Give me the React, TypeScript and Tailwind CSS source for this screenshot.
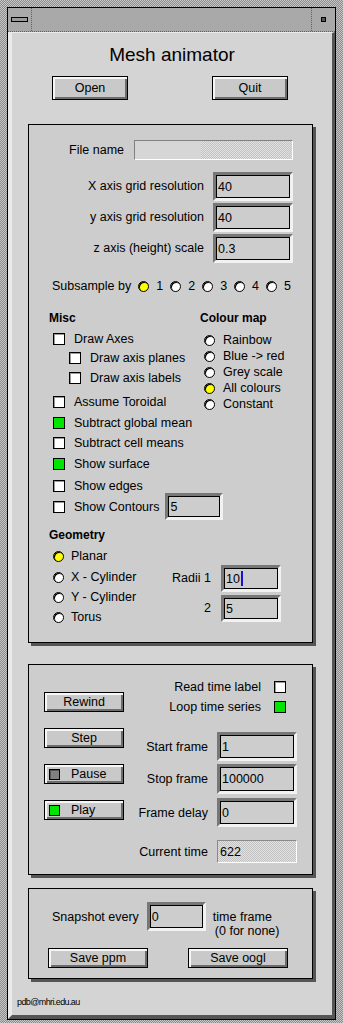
import React from 'react';

// stippled (dithered) fills like the old X server look
const stippleDark = 'bg-[image:repeating-conic-gradient(#8a8a8a_0_25%,#c8c8c8_0_50%)] bg-[length:2px_2px] bg-size-[2px_2px]';
const stippleLight = 'bg-[image:repeating-conic-gradient(#c2c2c2_0_25%,#e2e2e2_0_50%)] bg-[length:2px_2px] bg-size-[2px_2px]';

type Kids = { children?: React.ReactNode; className?: string };

const Panel: React.FC<Kids> = ({ children, className = '' }) => (
    <div className={`ml-[16px] w-[285px] shrink-0 border border-black bg-[#cdcdcd] shadow-[3px_3px_0_#555] ${className}`}>
        {children}
    </div>
);

const Btn: React.FC<Kids & { dot?: 'gray' | 'green' }> = ({ children, className = '', dot }) => (
    <div
        className={`flex items-center shrink-0 border border-black bg-[#c9c9c9] shadow-[inset_2px_2px_0_#f6f6f6,inset_-2px_-2px_0_#6c6c6c] leading-[14px] ${dot ? 'pl-[4px]' : 'justify-center'} ${className}`}
    >
        {dot && (
            <span
                className={`w-[11px] h-[11px] border border-black mr-[11px] ${dot === 'green' ? 'bg-[#00e600]' : 'bg-[#808080] shadow-[inset_1px_1px_0_#555]'}`}
            />
        )}
        <span>{children}</span>
    </div>
);

const Field: React.FC<Kids & { cursor?: boolean }> = ({ children, className = '', cursor }) => (
    <div className={`shrink-0 border-[3px] border-t-[#777] border-l-[#777] border-r-[#f2f2f2] border-b-[#f2f2f2] ${className}`}>
        <div className="h-full border border-black bg-[#cdcdcd] flex items-center pl-[1px] leading-[14px]">
            {children}
            {cursor && <span className="ml-[1px] w-[2px] h-[15px] bg-[#1414d8]" />}
        </div>
    </div>
);

const Check: React.FC<{ on?: boolean; className?: string }> = ({ on, className = '' }) => (
    <span
        className={`inline-block shrink-0 w-[12px] h-[12px] border border-black ${on ? 'bg-[#00e600]' : 'bg-white shadow-[inset_1px_1px_0_#9a9a9a]'} ${className}`}
    />
);

const Radio: React.FC<{ on?: boolean; className?: string }> = ({ on, className = '' }) => (
    <span
        className={`inline-block shrink-0 w-[11px] h-[11px] rounded-full border border-black shadow-[inset_1px_1px_0_#000] ${on ? 'bg-[#ffff00]' : 'bg-white'} ${className}`}
    />
);

const CheckRow: React.FC<{ label: string; on?: boolean; className?: string }> = ({ label, on, className = '' }) => (
    <div className={`flex items-center h-[14px] leading-[14px] ${className}`}>
        <Check on={on} />
        <span className="ml-[9px]">{label}</span>
    </div>
);

const RadioRow: React.FC<{ label: string; on?: boolean; className?: string }> = ({ label, on, className = '' }) => (
    <div className={`flex items-center leading-[14px] ${className}`}>
        <Radio on={on} />
        <span className="ml-[7px]">{label}</span>
    </div>
);

export default function App() {
    return (
        <div
            className={`w-[343px] h-[1023px] px-[7px] pt-[7px] pb-[3px] whitespace-nowrap text-black text-[12.5px] font-['Liberation_Sans',Arial,sans-serif] ${stippleDark}`}
        >
            <div className="h-full border border-black flex flex-col">
                {/* title bar */}
                <div className="h-[24px] shrink-0 flex bg-[#a9a9a9] border-b border-dotted border-[#5e5e5e]">
                    <div className="w-[24px] border-r border-dotted border-[#5e5e5e] flex items-center justify-center">
                        <span className="w-[17px] h-[5px] border border-black bg-[#9a9a9a]" />
                    </div>
                    <div className="flex-1" />
                    <div className="w-[24px] border-l border-dotted border-[#5e5e5e] flex items-center justify-center">
                        <span className="w-[5px] h-[5px] border-[1.5px] border-black bg-[#555]" />
                    </div>
                </div>

                {/* window body */}
                <div className="flex-1 flex flex-col bg-[#d4d4d4] border-l-[4px] border-t border-r-[3px] border-b-[4px] border-l-[#ebebeb] border-t-[#ebebeb] border-r-[#555] border-b-[#555]">
                    <h1 className="mt-[11px] text-center text-[19px] leading-[22px] font-normal">Mesh animator</h1>

                    <div className="mt-[10px] pl-[40px] flex gap-[84px]">
                        <Btn className="w-[76px] h-[24px]">Open</Btn>
                        <Btn className="w-[76px] h-[24px]">Quit</Btn>
                    </div>

                    {/* settings panel */}
                    <Panel className="mt-[24px] h-[519px] flex flex-col">
                        <div className="mt-[15px] pr-[19px] flex items-center justify-end h-[20px]">
                            <span className="mr-[10px]">File name</span>
                            <div className="w-[159px] h-[20px] flex border border-t-[#808080] border-l-[#808080] border-r-white border-b-white">
                                <div className="w-[66px] bg-[#d6d6d6]" />
                                <div className={`flex-1 ${stippleLight}`} />
                            </div>
                        </div>

                        <div className="mt-[12px] pr-[19px] flex flex-col items-end gap-[2px]">
                            <div className="flex items-center">
                                <span className="mr-[9px]">X axis grid resolution</span>
                                <Field className="w-[80px] h-[29px]">40</Field>
                            </div>
                            <div className="flex items-center">
                                <span className="mr-[9px]">y axis grid resolution</span>
                                <Field className="w-[80px] h-[29px]">40</Field>
                            </div>
                            <div className="flex items-center">
                                <span className="mr-[9px]">z axis (height) scale</span>
                                <Field className="w-[80px] h-[29px]">0.3</Field>
                            </div>
                        </div>

                        <div className="mt-[16px] pl-[23px] h-[14px] flex items-center leading-[14px]">
                            <span>Subsample by</span>
                            {['1', '2', '3', '4', '5'].map((n) => (
                                <span key={n} className="ml-[7px] flex items-center">
                                    <Radio on={n === '1'} />
                                    <span className="ml-[7px]">{n}</span>
                                </span>
                            ))}
                        </div>

                        {/* Misc + Colour map */}
                        <div className="mt-[18px] pl-[20px] flex">
                            <div className="w-[151px] shrink-0 flex flex-col">
                                <b className="h-[14px] leading-[14px] text-[12px]">Misc</b>
                                <CheckRow className="mt-[7px] ml-[4px]" label="Draw Axes" />
                                <CheckRow className="mt-[5px] ml-[20px]" label="Draw axis planes" />
                                <CheckRow className="mt-[6px] ml-[20px]" label="Draw axis labels" />
                                <CheckRow className="mt-[10px] ml-[4px]" label="Assume Toroidal" />
                                <CheckRow className="mt-[7px] ml-[4px]" on label="Subtract global mean" />
                                <CheckRow className="mt-[6px] ml-[4px]" label="Subtract cell means" />
                                <CheckRow className="mt-[7px] ml-[4px]" on label="Show surface" />
                                <CheckRow className="mt-[8px] ml-[4px]" label="Show edges" />
                                <div className="ml-[4px] h-[27px] flex items-center leading-[14px]">
                                    <Check />
                                    <span className="ml-[9px]">Show Contours</span>
                                    <Field className="ml-[6px] w-[58px] h-[27px]">5</Field>
                                </div>
                            </div>
                            <div className="flex flex-col">
                                <b className="h-[14px] leading-[14px] text-[12px]">Colour map</b>
                                <div className="mt-[7px] ml-[4px] flex flex-col">
                                    <RadioRow className="h-[16px] [&>span:last-child]:ml-[8px]" label="Rainbow" />
                                    <RadioRow className="h-[16px] [&>span:last-child]:ml-[8px]" label="Blue -> red" />
                                    <RadioRow className="h-[16px] [&>span:last-child]:ml-[8px]" label="Grey scale" />
                                    <RadioRow className="h-[16px] [&>span:last-child]:ml-[8px]" on label="All colours" />
                                    <RadioRow className="h-[16px] [&>span:last-child]:ml-[8px]" label="Constant" />
                                </div>
                            </div>
                        </div>

                        {/* Geometry */}
                        <b className="mt-[8px] pl-[20px] h-[14px] leading-[14px] text-[12px]">Geometry</b>
                        <div className="flex">
                            <div className="pl-[24px] flex flex-col">
                                <RadioRow className="mt-[7px] h-[14px]" on label="Planar" />
                                <RadioRow className="mt-[7px] h-[14px]" label="X - Cylinder" />
                                <RadioRow className="mt-[6px] h-[14px]" label="Y - Cylinder" />
                                <RadioRow className="mt-[6px] h-[14px]" label="Torus" />
                            </div>
                            <div className="flex-1 mt-[23px] pr-[31px] flex flex-col items-end gap-[3px]">
                                <div className="flex items-center">
                                    <span className="mr-[10px]">Radii 1</span>
                                    <Field className="w-[60px] h-[27px]" cursor>10</Field>
                                </div>
                                <div className="flex items-center">
                                    <span className="mr-[10px]">2</span>
                                    <Field className="w-[60px] h-[27px]">5</Field>
                                </div>
                            </div>
                        </div>
                    </Panel>

                    {/* playback panel */}
                    <Panel className="mt-[21px] h-[211px] flex">
                        <div className="pl-[15px] flex flex-col shrink-0">
                            <Btn className="mt-[27px] w-[80px] h-[20px]">Rewind</Btn>
                            <Btn className="mt-[16px] w-[80px] h-[20px]">Step</Btn>
                            <Btn className="mt-[16px] w-[80px] h-[20px]" dot="gray">Pause</Btn>
                            <Btn className="mt-[16px] w-[80px] h-[20px]" dot="green">Play</Btn>
                        </div>
                        <div className="flex-1 flex flex-col items-end leading-[14px]">
                            <div className="mt-[15px] pr-[26px] h-[14px] flex items-center">
                                <span>Read time label</span>
                                <Check className="ml-[13px]" />
                            </div>
                            <div className="mt-[6px] pr-[26px] h-[14px] flex items-center">
                                <span>Loop time series</span>
                                <Check on className="ml-[13px]" />
                            </div>
                            <div className="mt-[18px] pr-[15px] flex items-center">
                                <span className="mr-[9px]">Start frame</span>
                                <Field className="w-[80px] h-[29px]">1</Field>
                            </div>
                            <div className="mt-[3px] pr-[15px] flex items-center">
                                <span className="mr-[9px]">Stop frame</span>
                                <Field className="w-[80px] h-[30px]">100000</Field>
                            </div>
                            <div className="mt-[4px] pr-[15px] flex items-center">
                                <span className="mr-[9px]">Frame delay</span>
                                <Field className="w-[80px] h-[29px]">0</Field>
                            </div>
                            <div className="mt-[13px] pr-[15px] flex items-center">
                                <span className="mr-[9px]">Current time</span>
                                <div className={`w-[80px] h-[23px] flex items-center pl-[2px] border border-t-[#8a8a8a] border-l-[#8a8a8a] border-r-white border-b-white ${stippleLight}`}>
                                    622
                                </div>
                            </div>
                        </div>
                    </Panel>

                    {/* snapshot panel */}
                    <Panel className="mt-[13px] h-[91px] flex flex-col">
                        <div className="mt-[13px] pl-[23px] flex items-start leading-[14px]">
                            <span className="mt-[8px]">Snapshot every</span>
                            <Field className="ml-[8px] w-[59px] h-[29px]">0</Field>
                            <div className="ml-[7px] mt-[8px] flex flex-col">
                                <span>time frame</span>
                                <span className="pl-[2px]">(0 for none)</span>
                            </div>
                        </div>
                        <div className="mt-[10px] pl-[19px] flex gap-[40px]">
                            <Btn className="w-[100px] h-[20px]">Save ppm</Btn>
                            <Btn className="w-[100px] h-[20px]">Save oogl</Btn>
                        </div>
                    </Panel>

                    <div className="mt-[17px] pl-[5px] text-[9px] leading-[12px] tracking-[-0.6px]">pdb@mhri.edu.au</div>
                </div>
            </div>
        </div>
    );
}
